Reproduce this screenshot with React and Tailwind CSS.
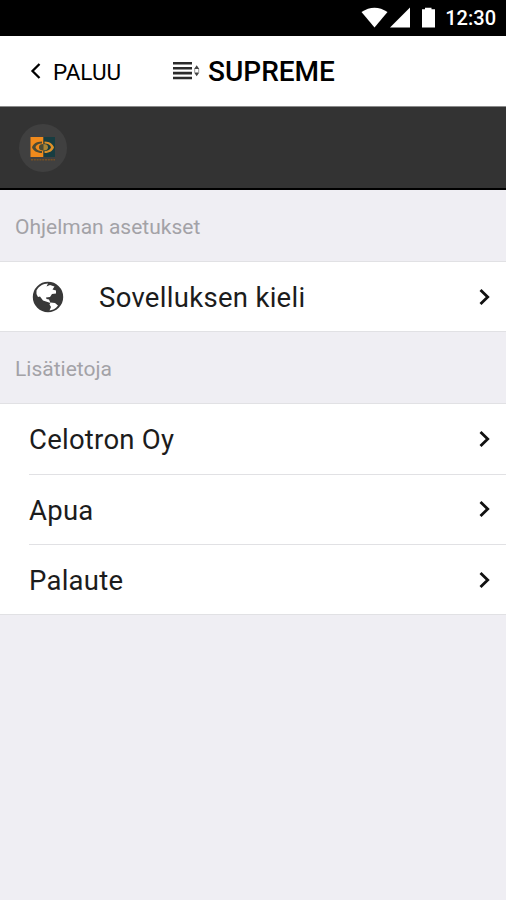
import React from 'react';

const App = () => (
  <div className="flex flex-col w-full h-screen overflow-hidden bg-[#efeef3] font-[Roboto,sans-serif] text-black">
    <StatusBar />
    <Header />
    <Banner />
    <SectionTitle label="Ohjelman asetukset" />
    <div className="border-y border-[#e1e1e4] bg-white h-[71px]">
      <div className="flex items-center h-full pl-8 pr-3.5">
        <GlobeIcon />
        <span className="ml-[35px] pt-[3px] grow text-[27.5px] tracking-[0.3px] leading-none text-[#1c1c1c]">Sovelluksen kieli</span>
        <ChevronRight />
      </div>
    </div>
    <SectionTitle label="Lisätietoja" />
    <div className="border-y border-[#e1e1e4] bg-white">
      <ListItem label="Celotron Oy" />
      <ListItem label="Apua" />
      <ListItem label="Palaute" last />
    </div>
  </div>
);

const StatusBar = () => (
  <div className="flex items-center justify-end h-9 shrink-0 bg-black text-white pr-2.5">
    <svg className="w-[75px] h-6" viewBox="0 0 75 24" fill="currentColor">
      <path d="M1.500 6Q14.500-2.500 27.500 6L14.500 21.500Z" />
      <path d="M50 1.500V21.500H30Z" />
      <path d="M62 3.300h3V1.700h6.500v1.600H75v18.200H62Z" />
    </svg>
    <span className="ml-[10px] text-xl leading-none font-medium">12:30</span>
  </div>
);

const Header = () => (
  <div className="flex items-center h-[71px] shrink-0 bg-white border-b border-[#8a8a8a] pl-[29px]">
    <svg className="w-3 h-4" viewBox="0 0 12 16" fill="none" stroke="currentColor" strokeWidth="2.3">
      <path d="M10.500 1L3.500 8L10.500 15" />
    </svg>
    <span className="ml-[12px] pt-0.5 text-[22.5px] leading-none w-[120px]">PALUU</span>
    <svg className="w-[27px] h-[18px]" viewBox="0 0 27 18" fill="#2b2b2b">
      <path d="M0 0h19v2.600H0zM0 4.900h19v2.600H0zM0 9.800h19v2.600H0zM0 14.700h19v2.600H0z" />
      <path d="M23.700 3.200L26.300 7H21.100ZM23.700 14.200L26.300 10.400H21.100Z" fill="#444" />
      <path d="M21.700 7V10.500M25.700 7V10.500" stroke="#999" />
    </svg>
    <span className="ml-2 pt-0.5 text-[28px] leading-none font-medium">SUPREME</span>
  </div>
);

const Banner = () => (
  <div className="flex items-center h-[83px] shrink-0 bg-[#333333] border-b-2 border-black pl-[19px]">
    <div className="flex items-center justify-center w-12 h-12 rounded-full bg-[#404040] pt-0.5">
      <svg className="w-[26px] h-[26px]" viewBox="0 0 26 26">
        <path d="M0.500 1H13.500V21H0.500Z" fill="#f08a1c" />
        <path d="M13.500 1H25V21H13.500Z" fill="#173d41" />
        <path d="M12 5.500C6 5.500 3 8.500 2 11.200C3 14.500 7 17 12 17V15C9 15 6 13.500 5.500 11.200C6 9 9 7.500 12 7.500Z" fill="#4b4b35" />
        <path d="M14.500 5.500C20 5.500 23 8.500 24 11.200C23 14.500 20 17 14.500 17V15C18 15 20.500 13.500 21 11.200C20.500 9 18 7.500 14.500 7.500Z" fill="#df9129" />
        <ellipse cx="13.500" cy="11.200" rx="4.500" ry="3.300" fill="#a88435" />
        <path d="M13.500 7.900A4.500 3.300 0 0 0 13.500 14.500Z" fill="#4b4b35" />
        <path d="M1 23.800H25" stroke="#765024" strokeWidth="1.500" strokeDasharray="2 .8" />
      </svg>
    </div>
  </div>
);

const SectionTitle = ({ label }) => (
  <div className="flex items-center h-[71px] shrink-0 pl-[15px] pt-1 text-[21px] text-[#a3a2a7]">
    {label}
  </div>
);

const ListItem = ({ label, last }) => (
  <div
    className={`flex items-center ml-[29px] pr-3.5 ${
      last ? 'h-[69px]' : 'h-[70.5px] border-b border-[#e1e1e4]'
    }`}
  >
    <span className="grow pt-0.5 text-[27.5px] tracking-[0.25px] leading-none text-[#1c1c1c]">{label}</span>
    <ChevronRight />
  </div>
);

const ChevronRight = () => (
  <svg className="w-3.5 h-[18px]" viewBox="0 0 14 18" fill="none" stroke="#111" strokeWidth="2.8">
    <path d="M2.500 2L9.700 9L2.500 16" />
  </svg>
);

const GlobeIcon = () => (
  <svg className="w-8 h-8" viewBox="0 0 32 32">
    <circle cx="16" cy="16" r="14.300" fill="#383838" stroke="#383838" strokeWidth="1.800" />
    <path
      d="M4.500 9.500C7.500 4.500 11 3 16 2.500L14.500 5.500L18 4L22.500 5.500L20.500 8.500L24 9.500V12.500L20 13L18 16L14 16.500L14.500 18L17 18.500L18.500 22L15.500 21L11 19.500L8 15.500L6 16L4.500 13Z"
      fill="#fff"
    />
    <path d="M18.500 21.500L23 22L26 24.500C23.500 28 20.500 29 17.500 29.500L19 26L17.500 23.500Z" fill="#fff" />
  </svg>
);

export default App;
